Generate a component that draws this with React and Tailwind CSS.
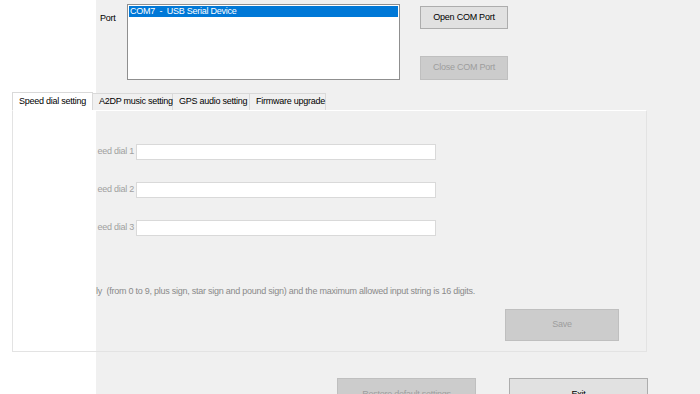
const font = { fontFamily: '"Liberation Sans", Arial, sans-serif', letterSpacing: '-0.25px' };

const Btn = ({ children, disabled, className = '' }) => (
  <div
    className={`flex items-center justify-center border text-[9px] ${
      disabled ? 'bg-[#cccccc] border-[#bfbfbf] text-[#9d9d9d]' : 'bg-[#e1e1e1] border-[#adadad] text-black'
    } ${className}`}
  >
    {children}
  </div>
);

const Tab = ({ children, active, className = '' }) => (
  <div
    className={`flex items-center pl-[6px] text-[9px] whitespace-nowrap border-t border-r border-[#d9d9d9] ${
      active ? 'bg-white h-[18px] -mt-[1px] border-l' : 'bg-[#f0f0f0] h-[17px]'
    } ${className}`}
  >
    {children}
  </div>
);

const DialRow = ({ n }) => (
  <div className="flex items-center h-[16px]">
    <div className="w-[46px] text-right pr-[2px] text-[9px] text-[#a0a0a0] whitespace-nowrap overflow-hidden">
      eed dial {n}
    </div>
    <div className="w-[300px] h-[16px] bg-white border border-[#d9d9d9]" />
  </div>
);

export default function App() {
  return (
    <div
      className="w-[700px] h-[394px] overflow-hidden bg-[linear-gradient(to_right,#ffffff_96px,#f0f0f0_96px)] text-black"
      style={font}
    >
      {/* Port selection */}
      <div className="flex pt-[4px] pl-[100px] h-[93px]">
        <div className="text-[9px] pt-[8px] w-[27px]">Port</div>
        <div className="w-[273px] h-[76px] bg-white border border-[#8f8f8f] p-[1px]">
          <div className="bg-[#0078d7] text-white text-[9px] h-[11px] leading-[11px] pl-[1px]">
            COM7&nbsp; -&nbsp; USB Serial Device
          </div>
        </div>
        <div className="flex flex-col ml-[20px] pt-[2px] gap-[27px]">
          <Btn className="w-[88px] h-[23px]">Open COM Port</Btn>
          <Btn disabled className="w-[88px] h-[24px]">Close COM Port</Btn>
        </div>
      </div>

      {/* Tab control */}
      <div className="ml-[12px] w-[635px]">
        <div className="flex h-[17px] items-end">
          <Tab active className="w-[81px]">Speed dial setting</Tab>
          <Tab className="w-[80px] pl-[1px]">A2DP music setting</Tab>
          <Tab className="w-[77px] pl-[4px]">GPS audio setting</Tab>
          <Tab className="w-[76px] pl-[4px]">Firmware upgrade</Tab>
        </div>
        <div className="h-[242px] border border-[#e3e3e3] border-t-white bg-[linear-gradient(to_right,#ffffff_83px,#f0f0f0_83px)]">
          <div className="pl-[77px] pt-[33px] flex flex-col gap-[22px]">
            <DialRow n={1} />
            <DialRow n={2} />
            <DialRow n={3} />
          </div>
          <div className="pl-[83px] pt-[49px] text-[9px] text-[#8a8a8a] whitespace-nowrap">
            ly&nbsp; (from 0 to 9, plus sign, star sign and pound sign) and the maximum allowed input string is 16 digits.
          </div>
          <div className="flex justify-end pr-[27px] pt-[10px]">
            <Btn disabled className="w-[114px] h-[32px]">Save</Btn>
          </div>
        </div>
      </div>

      {/* Bottom buttons */}
      <div className="flex pl-[337px] pt-[26px] gap-[33px]">
        <Btn disabled className="w-[139px] h-[30px] items-start pt-[9px]">Restore default settings</Btn>
        <Btn className="w-[139px] h-[30px] items-start pt-[9px]">Exit</Btn>
      </div>
    </div>
  );
}
